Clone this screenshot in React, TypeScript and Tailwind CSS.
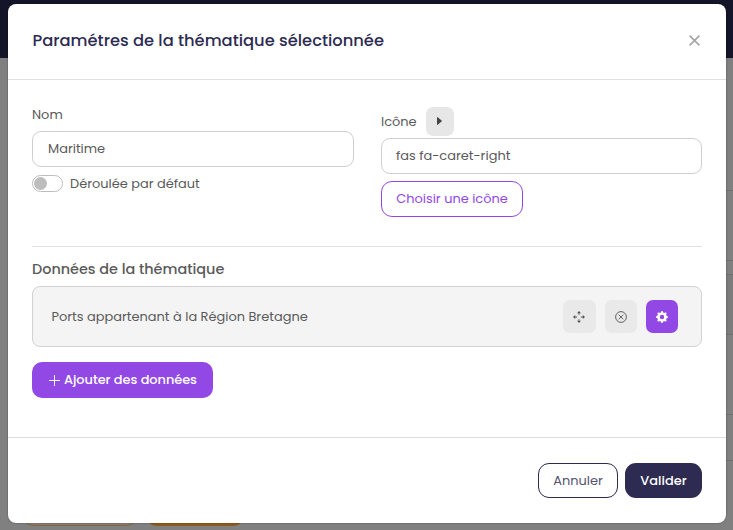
import type { ReactNode } from "react";

function IconButton({ children, className }: { children: ReactNode; className: string }) {
  return (
    <button type="button" className={`flex h-[33px] items-center justify-center rounded-[7px] ${className}`}>
      {children}
    </button>
  );
}

function PageBehind() {
  return (
    <div className="flex h-[530px] flex-col bg-[#808080]">
      <div className="h-[58px] shrink-0 bg-[#15152a]" />
      <div className="flex grow flex-col items-end">
        <div className="h-[133px] w-[10px] border-b border-[#6f6f6f]" />
        <div className="h-[70px] w-[10px] border-b border-[#6f6f6f]" />
        <div className="h-[14px] w-[10px] border-b border-[#6f6f6f]" />
        <div className="h-[60px] w-[10px] border-b border-[#6f6f6f] bg-[#7c7c7c]" />
        <div className="h-[80px] w-[10px] border-b border-[#6f6f6f]" />
        <div className="h-[46px] w-[10px] border-b border-[#6f6f6f]" />
      </div>
      <div className="flex shrink-0 gap-[8px] pb-[4px] pl-[22px]">
        <div className="h-[35px] w-[116px] rounded-[11px] border border-[#8a642f]" />
        <div className="h-[35px] w-[98px] rounded-[11px] bg-[#8a5b1c]" />
      </div>
    </div>
  );
}

export default function App() {
  return (
    <div className="relative h-[530px] w-[733px] overflow-hidden font-[Poppins,Inter,sans-serif] text-[12.95px] leading-[20px] text-[#5a5a5a]">
      <PageBehind />
      <div className="absolute top-[4px] left-[8px] flex h-[519px] w-[718px] flex-col rounded-[8px] bg-white shadow-[0_0_2px_rgba(0,0,0,0.4)]">
        <header className="flex h-[76px] shrink-0 items-center justify-between border-b border-[#dedede] pr-[26.5px] pl-[24.5px]">
          <h1 className="pb-[2px] text-[16.32px] font-medium whitespace-nowrap text-[#2d2b52]">Paramétres de la thématique sélectionnée</h1>
          <svg className="mb-[2px] h-[11px] w-[11px]" viewBox="0 0 11 11" fill="none" stroke="#a5a5a5" strokeWidth="1.6">
            <path d="M.6.6l9.8 9.8M10.4.6L.6 10.4" />
          </svg>
        </header>

        <main className="flex h-[357px] shrink-0 flex-col px-[24px] pt-[25px]">
          <div className="flex h-[142px] shrink-0 gap-[27px] border-b border-[#e3e3e3]">
            <section className="w-[322px]">
              <label className="block h-[26px]"><span>Nom</span></label>
              <div className="flex h-[36px] items-center rounded-[9px] border border-[#cfcfcf] px-[15px]">
                <span>Maritime</span>
              </div>
              <div className="mt-[7px] flex items-center gap-[7px]">
                <div className="mb-[2px] flex h-[17px] w-[31px] items-center rounded-full border border-[#bdbdbd] px-[1px]">
                  <div className="h-[13px] w-[13px] rounded-full bg-[#bdbdbd]" />
                </div>
                <span className="whitespace-nowrap">Déroulée par défaut</span>
              </div>
            </section>
            <section className="w-[321px] pt-[2px]">
              <div className="flex h-[31px] items-start gap-[10px]">
                <span className="mt-[5px] w-[35px] whitespace-nowrap">Icône</span>
                <div className="flex h-[29px] w-[28px] items-center justify-center rounded-[7px] bg-[#e7e7e7] pr-[1px] pb-[1px]">
                  <svg className="h-[8px] w-[5px]" viewBox="0 0 5 8" fill="#444"><path d="M0 .5Q0-.3.7.3L4.6 3.5q.6.5 0 1L.7 7.7Q0 8.2 0 7.5z" /></svg>
                </div>
              </div>
              <div className="flex h-[36px] items-center rounded-[9px] border border-[#cfcfcf] px-[14px]">
                <span>fas fa-caret-right</span>
              </div>
              <button type="button" className="mt-[7px] flex h-[36px] w-[142px] items-center justify-center rounded-[11px] border border-[#9248e4] pb-[1px] whitespace-nowrap text-[#9248e4]">
                <span>Choisir une icône</span>
              </button>
            </section>
          </div>

          <h2 className="mt-[12px] text-[14.4px] leading-[20px] font-medium"><span>Données de la thématique</span></h2>
          <div className="mt-[7px] flex h-[61px] shrink-0 items-center rounded-[8px] border border-[#d2d2d2] bg-[#f4f4f4] pr-[23px] pl-[18.5px]">
            <span className="grow whitespace-nowrap">Ports appartenant à la Région Bretagne</span>
            <div className="flex gap-[9px]">
              <IconButton className="w-[33px] bg-[#e9e9e9] pr-[1px]">
                <svg className="h-[12px] w-[12px]" viewBox="0 0 12 12" fill="#555">
                  <path d="M6 0l2 2.2H6.4v1.9h-.8V2.2H4zM6 12l2-2.2H6.4V7.9h-.8v1.9H4zM0 6l2.2-2v1.6h1.9v.8H2.2V8zM12 6L9.8 4v1.6H7.9v.8h1.9V8z" />
                </svg>
              </IconButton>
              <IconButton className="w-[32px] bg-[#e9e9e9] pr-[1px]">
                <svg className="h-[12px] w-[12px]" viewBox="0 0 12 12" fill="none" stroke="#555" strokeWidth=".9">
                  <circle cx="6" cy="6" r="5.4" /><path d="M3.7 3.7l4.6 4.6M8.3 3.7L3.7 8.3" />
                </svg>
              </IconButton>
              <IconButton className="w-[32px] bg-[#9248e4] pr-[1px]">
                <svg className="h-[12px] w-[12px]" viewBox="0 0 16 16" fill="white">
                  <path d="M9.405 1.05c-.413-1.4-2.397-1.4-2.81 0l-.1.34a1.464 1.464 0 0 1-2.105.872l-.31-.17c-1.283-.698-2.686.705-1.987 1.987l.169.311c.446.82.023 1.841-.872 2.105l-.34.1c-1.4.413-1.4 2.397 0 2.81l.34.1a1.464 1.464 0 0 1 .872 2.105l-.17.31c-.698 1.283.705 2.686 1.987 1.987l.311-.169a1.464 1.464 0 0 1 2.105.872l.1.34c.413 1.4 2.397 1.4 2.81 0l.1-.34a1.464 1.464 0 0 1 2.105-.872l.31.17c1.283.698 2.686-.705 1.987-1.987l-.169-.311a1.464 1.464 0 0 1 .872-2.105l.34-.1c1.4-.413 1.4-2.397 0-2.81l-.34-.1a1.464 1.464 0 0 1-.872-2.105l.17-.31c.698-1.283-.705-2.686-1.987-1.987l-.311.169a1.464 1.464 0 0 1-2.105-.872zM8 10.93a2.93 2.93 0 1 1 0-5.86 2.93 2.93 0 0 1 0 5.86z" />
                </svg>
              </IconButton>
            </div>
          </div>
          <button type="button" className="mt-[15px] flex h-[36px] w-[181px] shrink-0 items-center gap-[4px] rounded-[10px] bg-[#9248e4] pl-[17px] font-medium tracking-[-0.05px] whitespace-nowrap text-white">
            <svg className="h-[11px] w-[11px]" viewBox="0 0 11 11" stroke="white"><path d="M0 5.5h11M5.5 0v11" /></svg>
            <span>Ajouter des données</span>
          </button>
        </main>

        <footer className="flex h-[86px] items-center justify-end gap-[7px] border-t border-[#dedede] pr-[24px]">
          <button type="button" className="flex h-[35px] w-[80px] items-center justify-center rounded-[11px] border border-[#2d2b52] text-[#55536f]"><span>Annuler</span></button>
          <button type="button" className="flex h-[35px] w-[77px] items-center justify-center rounded-[11px] bg-[#2d2b52] font-medium text-white"><span>Valider</span></button>
        </footer>
      </div>
    </div>
  );
}
